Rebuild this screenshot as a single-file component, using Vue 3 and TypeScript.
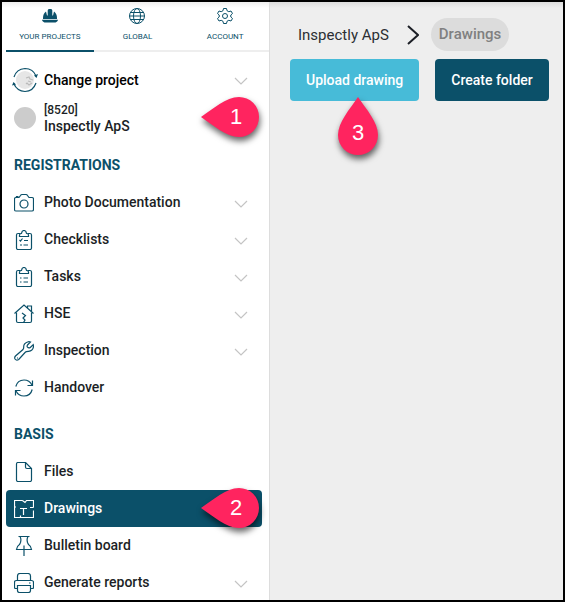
<script setup lang="ts">
import { ref } from 'vue'

interface MenuItem {
  label: string
  icon: string
  expandable: boolean
  marker?: number
}

interface MenuSection {
  title: string
  items: MenuItem[]
}

const icons: Record<string, string[]> = {
  camera: [
    'M2 4.500H5L6.500 2.500Q7 1.500 8 1.500H12Q13 1.500 13.500 2.500L15 4.500H18Q19.500 4.500 19.500 6V16.500Q19.500 18 18 18H2Q.5 18 .5 16.500V6Q.5 4.500 2 4.500Z',
    'M14 11A4 4 0 1 1 6 11A4 4 0 1 1 14 11Z',
    'M2.500 4.500V3.500H4.500',
  ],
  checklist: [
    'M6 3.500H4Q2.500 3.500 2.500 5V18Q2.500 19.500 4 19.500H16Q17.500 19.500 17.500 18V5Q17.500 3.500 16 3.500H14',
    'M5.500 6.500V5Q5.500 3.500 7.500 3.300Q8 .5 10 .5Q12 .5 12.500 3.300Q14.500 3.500 14.500 5V6.500Z',
    'M5.500 10L6.500 11L8.500 8.500M10 10.500H14M6 15H8M9.500 15H14',
  ],
  tasks: [
    'M6 3.500H4Q2.500 3.500 2.500 5V18Q2.500 19.500 4 19.500H16Q17.500 19.500 17.500 18V5Q17.500 3.500 16 3.500H14',
    'M5.500 6.500V5Q5.500 3.500 7.500 3.300Q8 .5 10 .5Q12 .5 12.500 3.300Q14.500 3.500 14.500 5V6.500Z',
    'M6 11H7.500M9.500 11H14M6 15H7.500M9.500 15H14',
  ],
  house: [
    'M.5 9.500L10 1L19.500 9.500',
    'M2.500 8.500V17Q2.500 18.500 4 18.500H16Q17.500 18.500 17.500 17V8.500',
    'M13.500 4V2H17.500V7.500',
    'M8 9L11.500 11.500L9 14L11 16L9.500 18.500',
  ],
  wrench: [
    'M13.500 1Q9.500 2.500 9.700 6Q9.800 7.500 9 8.500L1.500 15Q.2 16.500 1 18Q2.500 20 4.700 18.500L11.500 11Q12.500 10.200 14.500 10.300Q19 9.800 19.500 5.500L19.200 3.700L16 6.700Q14.500 7.200 13.500 6.200Q12.700 5.200 13.500 4L16.500 1Q15 .3 13.500 1Z',
    'M3 17H4',
  ],
  refresh: [
    'M1.800 8.500Q3.500 2 10 2Q15.500 2 18 7',
    'M18.500 2.500V7.500H13.500',
    'M18.200 11.500Q16.500 18 10 18Q4.500 18 2 13',
    'M1.500 17.500V12.500H6.500',
  ],
  file: [
    'M4 .5H11.500L17.500 6.500V18Q17.500 19.500 16 19.500H4Q2.500 19.500 2.500 18V2Q2.500 .5 4 .5Z',
    'M11.500 .5V5Q11.500 6.500 13 6.500H17.500',
  ],
  plan: [
    'M8.500 1.500H.5V18.500H19.500V11.500M19.500 8.500V1.500H12.500L11 3.500L8.500 1.500',
    'M6 9.500H13M16 8.500H19.500M9.500 9.500V16M6.500 18V16.500M.5 8H2',
  ],
  pin: [
    'M4.500 .5H15.500M6 .5Q7.500 3 6.500 6.500L5.500 8.500Q3 10 2.500 13.500H17.500Q17 10 14.500 8.500L13.500 6.500Q12.500 3 14 .5',
    'M10 9.500V20',
  ],
  printer: [
    'M3.500 7V3Q3.500 .5 6 .5H14Q16.500 .5 16.500 3V7',
    'M3.500 15.500H1.500Q.5 15.500 .5 14V9.500Q.5 7.500 2.500 7.500H17.500Q19.500 7.500 19.500 9.500V14Q19.500 15.500 18.500 15.500H16.500',
    'M3.500 12.500H16.500V17.500Q16.500 19.500 14.500 19.500H5.500Q3.500 19.500 3.500 17.500ZM15 10H16.500',
  ],
}

const sections: MenuSection[] = [
  {
    title: 'Registrations',
    items: [
      { label: 'Photo Documentation', icon: 'camera', expandable: true },
      { label: 'Checklists', icon: 'checklist', expandable: true },
      { label: 'Tasks', icon: 'tasks', expandable: true },
      { label: 'HSE', icon: 'house', expandable: true },
      { label: 'Inspection', icon: 'wrench', expandable: true },
      { label: 'Handover', icon: 'refresh', expandable: false },
    ],
  },
  {
    title: 'Basis',
    items: [
      { label: 'Files', icon: 'file', expandable: false },
      { label: 'Drawings', icon: 'plan', expandable: false, marker: 2 },
      { label: 'Bulletin board', icon: 'pin', expandable: false },
      { label: 'Generate reports', icon: 'printer', expandable: true },
    ],
  },
]

const tabs = ['Your projects', 'Global', 'Account']
const activeTab = ref(tabs[0])
const activeItem = ref('Drawings')
</script>

<template>
  <div class="frame">
    <aside class="sidebar">
      <nav class="tabs">
        <button
          v-for="tab in tabs"
          :key="tab"
          type="button"
          class="tab"
          :class="{ active: tab === activeTab }"
          @click="activeTab = tab"
        >
          <svg v-if="tab === 'Your projects'" class="tab-icon" viewBox="0 0 16 16">
            <path class="solid" d="M1 11V10Q1 5.500 4 3.500L5 7.500H5.700V2.500Q5.700 1 7 1H9Q10.300 1 10.300 2.500V7.500H11L12 3.500Q15 5.500 15 10V11Z" />
            <path class="solid" d="M0 11.700H16Q15.500 14.500 12 14.500H4Q.5 14.500 0 11.700Z" />
          </svg>
          <svg v-else-if="tab === 'Global'" class="tab-icon" viewBox="0 0 16 16">
            <circle cx="8" cy="8" r="7.500" />
            <ellipse cx="8" cy="8" rx="3.500" ry="7.500" />
            <path d="M1.500 4.500H14.500M1.500 11.500H14.500M.5 8H15.500" />
          </svg>
          <svg v-else class="tab-icon" viewBox="0 0 16 16">
            <path d="M6.500 .5H9.500L10 2.700L11.800 3.700L14 3L15.500 5.500L13.800 7V9L15.500 10.500L14 13L11.800 12.300L10 13.300L9.500 15.500H6.500L6 13.300L4.200 12.300L2 13L.5 10.500L2.200 9V7L.5 5.500L2 3L4.200 3.700L6 2.700Z" />
            <circle cx="8" cy="8" r="2.500" />
          </svg>
          <span>{{ tab }}</span>
        </button>
      </nav>

      <button type="button" class="row change">
        <svg class="globe" viewBox="0 0 26 26">
          <circle class="moon" cx="13" cy="13" r="9" />
          <path class="crater" d="M14 11L17 10L18 12L21 13M14 17L15 16L17 18L20 16M16 14L19 15" />
          <path d="M2 10Q4.500 2 13 1.500Q21 1.500 24 9M24 16Q21 24.500 13 24.500Q5 24 2 17" />
          <path class="solid" d="M22 8.500L26 7L24.500 11ZM0 18.500L1.500 15L4 17.500Z" />
        </svg>
        <span class="label">Change project</span>
        <svg class="chevron" viewBox="0 0 14 8"><path d="M1 1L7 7L13 1" /></svg>
      </button>

      <div class="project">
        <span class="avatar"></span>
        <span class="project-name"><small>[8520]</small>Inspectly ApS</span>
        <span class="marker marker-side">
          <svg viewBox="0 0 58 40"><path d="M0 20C12 12 25 0 38 0A20 20 0 0 1 38 40C25 40 12 28 0 20Z" /></svg>
          <b>1</b>
        </span>
      </div>

      <section v-for="section in sections" :key="section.title">
        <h2>{{ section.title }}</h2>
        <button
          v-for="item in section.items"
          :key="item.label"
          type="button"
          class="row item"
          :class="{ selected: item.label === activeItem }"
          @click="activeItem = item.label"
        >
          <svg class="icon" viewBox="0 0 20 20">
            <path v-for="d in icons[item.icon]" :key="d" :d="d" />
          </svg>
          <span class="label">{{ item.label }}</span>
          <svg v-if="item.expandable" class="chevron" viewBox="0 0 14 8"><path d="M1 1L7 7L13 1" /></svg>
          <span v-if="item.marker" class="marker marker-side">
            <svg viewBox="0 0 58 40"><path d="M0 20C12 12 25 0 38 0A20 20 0 0 1 38 40C25 40 12 28 0 20Z" /></svg>
            <b>{{ item.marker }}</b>
          </span>
        </button>
      </section>
    </aside>

    <main class="content">
      <nav class="crumbs">
        <a href="#">Inspectly ApS</a>
        <svg class="separator" viewBox="0 0 12 20"><path d="M1 1L11 10L1 19" /></svg>
        <span class="current">Drawings</span>
      </nav>
      <div class="actions">
        <button type="button" class="action upload">
          Upload drawing
          <span class="marker marker-below">
            <svg viewBox="0 0 40 58"><path d="M20 0C28 12 40 25 40 38A20 20 0 0 1 0 38C0 25 12 12 20 0Z" /></svg>
            <b>3</b>
          </span>
        </button>
        <button type="button" class="action">Create folder</button>
      </div>
    </main>
  </div>
</template>

<style>
body {
  margin: 0;
}
</style>

<style scoped>
.frame {
  box-sizing: border-box;
  display: flex;
  height: 100vh;
  border: 2px solid #000;
  background: #eee;
  color: #1c1f26;
  font: 500 14px/16px Roboto, sans-serif;
}

button {
  margin: 0;
  border: 0;
  background: none;
  color: inherit;
  font: inherit;
  cursor: pointer;
}

svg {
  flex: none;
  fill: none;
  stroke: currentColor;
}

.solid {
  fill: currentColor;
  stroke: none;
}

.sidebar {
  box-sizing: border-box;
  flex: none;
  width: 268px;
  padding-left: 4px;
  border-right: 1px solid #ddd;
  background: linear-gradient(#eee, #fff 6px);
  overflow: hidden auto;
  scrollbar-width: none;
}

.tabs {
  display: grid;
  grid-template-columns: repeat(3, 1fr);
  margin-bottom: 9px;
}

.tab {
  display: flex;
  flex-direction: column;
  align-items: center;
  gap: 8px;
  padding: 6px 0 8px;
  border-bottom: 2px solid #eee;
  color: #0b5069;
  font-size: 8px;
  font-weight: 400;
  line-height: 10px;
  text-transform: uppercase;
}

.tab.active {
  border-color: #0b5069;
}

.tab-icon {
  width: 16px;
  height: 16px;
}

.row {
  position: relative;
  box-sizing: border-box;
  display: flex;
  align-items: center;
  gap: 10px;
  width: calc(100% - 7px);
  height: 37px;
  padding: 0 14px 0 8px;
  border-radius: 4px;
  text-align: left;
}

.row.selected {
  background: #0b5069;
  color: #fff;
}

.label {
  flex: 1;
}

.item .label {
  padding-bottom: 2px;
}

.icon {
  width: 20px;
  height: 20px;
  color: #0b5069;
  stroke-width: 1.2;
}

.selected .icon {
  color: #fff;
}

.chevron {
  width: 14px;
  height: 8px;
  margin-top: 3px;
  color: #c4c4c4;
  stroke-width: 1.2;
}

.change {
  gap: 6px;
  padding-left: 6px;
  color: #000;
}

.globe {
  width: 26px;
  height: 26px;
  color: #0b5069;
  stroke-width: 1.2;
}

.moon {
  fill: #e6e6e6;
  stroke: none;
}

.crater {
  stroke: #bbb;
}

.project {
  position: relative;
  box-sizing: border-box;
  display: flex;
  align-items: center;
  gap: 8px;
  width: calc(100% - 7px);
  height: 40px;
  padding-left: 8px;
}

.avatar {
  width: 22px;
  height: 22px;
  border-radius: 50%;
  background: #ccc;
}

.project-name small {
  display: block;
  font-size: 12px;
}

h2 {
  margin: 0;
  padding: 20px 8px 11px;
  color: #0b5069;
  font-size: 14px;
  font-weight: 700;
  line-height: 16px;
  text-transform: uppercase;
}

.project + section h2 {
  padding-top: 19px;
}

.marker {
  position: absolute;
  z-index: 1;
  display: block;
  color: #fff;
}

.marker svg {
  display: block;
  width: 100%;
  height: 100%;
  fill: #ff245f;
  stroke: none;
  filter: drop-shadow(1px 4px 3px rgba(0, 0, 0, 0.6));
}

.marker b {
  position: absolute;
  right: 0;
  bottom: 0;
  width: 100%;
  font: 400 22px/40px "Liberation Sans", sans-serif;
  text-align: center;
}

.marker-side {
  top: 50%;
  right: 3px;
  width: 58px;
  height: 40px;
  margin-top: -21px;
}

.marker-side b {
  width: 46px;
}

.marker-below {
  top: 38px;
  left: 48px;
  width: 40px;
  height: 58px;
}

.marker-below b {
  line-height: 44px;
}

.content {
  flex: 1;
  min-width: 0;
  padding: 16px 14px 0 20px;
  background: linear-gradient(#ddd, #eee 6px);
}

.crumbs {
  display: flex;
  align-items: center;
  height: 33px;
  padding-left: 8px;
  margin-bottom: 8px;
  font-size: 15px;
  font-weight: 400;
}

.crumbs a {
  color: #2b2e33;
  text-decoration: none;
}

.separator {
  width: 12px;
  height: 20px;
  margin: 0 12px 0 18px;
  stroke-width: 2;
}

.current {
  padding: 0 8px;
  border-radius: 17px;
  background: #dcdcdc;
  color: #808080;
  font-weight: 500;
  line-height: 33px;
}

.actions {
  display: flex;
  gap: 16px;
}

.action {
  position: relative;
  height: 42px;
  padding: 0 16px;
  border-radius: 4px;
  background: #0b5069;
  color: #fff;
  white-space: nowrap;
}

.upload {
  background: #47bbd8;
}
</style>
